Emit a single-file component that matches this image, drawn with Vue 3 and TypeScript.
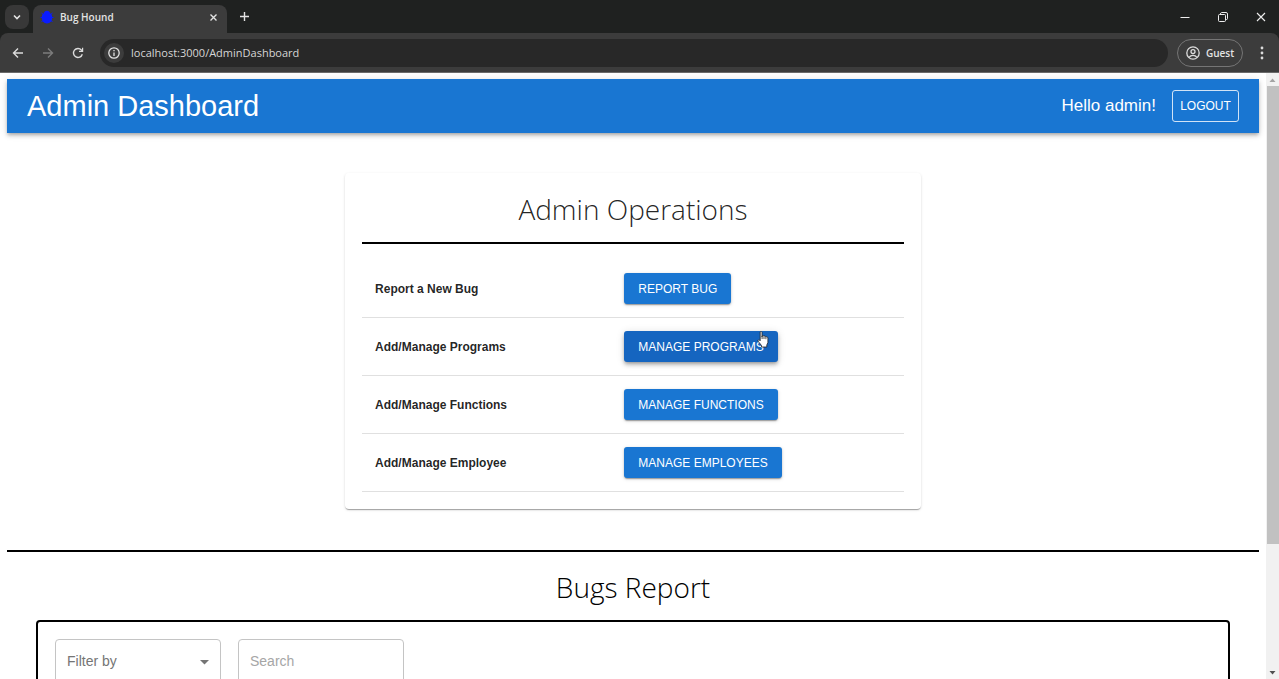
<script setup lang="ts">
import { ref } from 'vue'

interface Operation {
  id: string
  label: string
  action: string
}

const operations: Operation[] = [
  { id: 'bug', label: 'Report a New Bug', action: 'REPORT BUG' },
  { id: 'programs', label: 'Add/Manage Programs', action: 'MANAGE PROGRAMS' },
  { id: 'functions', label: 'Add/Manage Functions', action: 'MANAGE FUNCTIONS' },
  { id: 'employee', label: 'Add/Manage Employee', action: 'MANAGE EMPLOYEES' },
]

const hovered = ref('programs')
const address = ref('localhost:3000/AdminDashboard')
const filter = ref('')
const search = ref('')
</script>

<template>
  <div class="window">
    <header class="chrome">
      <div class="tabstrip">
        <button class="tab-search" aria-label="Search tabs">
          <svg width="10" height="10" viewBox="0 0 10 10"><path d="M2 3.5 5 6.5 8 3.5" fill="none" stroke="#e3e3e3" stroke-width="1.6" /></svg>
        </button>
        <div class="tab">
          <svg class="favicon" width="14" height="14" viewBox="0 0 14 14">
            <path d="M1.500 3 4 5M12.500 3 10 5M.5 7.500H13.500M1.500 12 4 9.500M12.500 12 10 9.500" stroke="#0a1cf5" stroke-width="1" />
            <path d="M7 .8C8.800 .8 9.800 2 10.100 3.200 11.600 4 12.200 5.600 12.200 7.500 12.200 11 10 13.400 7 13.400S1.800 11 1.800 7.500C1.800 5.600 2.400 4 3.900 3.200 4.200 2 5.200 .8 7 .8Z" fill="#0a1cff" />
          </svg>
          <span class="tab-title">Bug Hound</span>
          <button class="icon-button" aria-label="Close tab">
            <svg width="9" height="9" viewBox="0 0 9 9"><path d="M1.500 1.500 7.500 7.500M7.500 1.500 1.500 7.500" stroke="#e3e3e3" stroke-width="1.400" /></svg>
          </button>
        </div>
        <button class="icon-button new-tab" aria-label="New tab">
          <svg width="11" height="11" viewBox="0 0 11 11"><path d="M5.500 1V10M1 5.500H10" stroke="#e3e3e3" stroke-width="1.400" /></svg>
        </button>
        <div class="window-controls">
          <button class="icon-button" aria-label="Minimize">
            <svg width="10" height="10" viewBox="0 0 10 10"><path d="M.5 5.500H9.500" stroke="#eee" /></svg>
          </button>
          <button class="icon-button" aria-label="Restore">
            <svg width="10" height="10" viewBox="0 0 10 10" fill="none" stroke="#eee"><rect x=".5" y="2.500" width="7" height="7" rx="1" /><path d="M2.500 2.500V2A1.500 1.500 0 0 1 3.500 .5H8A1.500 1.500 0 0 1 9.500 2V6.500A1 1 0 0 1 8.500 7.500H7.500" /></svg>
          </button>
          <button class="icon-button" aria-label="Close window">
            <svg width="10" height="10" viewBox="0 0 10 10"><path d="M1 1 9 9M9 1 1 9" stroke="#eee" stroke-width="1.100" /></svg>
          </button>
        </div>
      </div>
      <div class="toolbar">
        <button class="icon-button" aria-label="Back">
          <svg width="12" height="12" viewBox="0 0 12 12"><path d="M11 6H1.500M6 1.500 1.500 6 6 10.500" fill="none" stroke="#dcdcdc" stroke-width="1.400" /></svg>
        </button>
        <button class="icon-button" aria-label="Forward">
          <svg width="12" height="12" viewBox="0 0 12 12"><path d="M1 6H10.500M6 1.500 10.500 6 6 10.500" fill="none" stroke="#7c7c7c" stroke-width="1.400" /></svg>
        </button>
        <button class="icon-button" aria-label="Reload">
          <svg width="12" height="12" viewBox="0 0 12 12"><path d="M10.300 7.200A4.500 4.500 0 1 1 9.400 3L10.600 4.200" fill="none" stroke="#dcdcdc" stroke-width="1.400" /><path d="M11.200 .8V5H7V3.800H10V.8Z" fill="#dcdcdc" /></svg>
        </button>
        <div class="omnibox">
          <button class="site-info" aria-label="View site information">
            <svg width="12" height="12" viewBox="0 0 12 12"><circle cx="6" cy="6" r="5.200" fill="none" stroke="#e3e3e3" stroke-width="1.300" /><path d="M6 5.400V9M6 3V4.300" stroke="#e3e3e3" stroke-width="1.300" /></svg>
          </button>
          <input v-model="address" class="address" type="text" aria-label="Address" />
        </div>
        <button class="guest">
          <svg width="14" height="14" viewBox="0 0 14 14" fill="none" stroke="#dcdcdc" stroke-width="1.300"><circle cx="7" cy="7" r="6.200" /><circle cx="7" cy="5.600" r="2" /><path d="M3 11.400C4.200 9.800 5.500 9.300 7 9.300S9.800 9.800 11 11.400" /></svg>
          Guest
        </button>
        <button class="icon-button menu" aria-label="Browser menu">
          <svg width="4" height="14" viewBox="0 0 4 14" fill="#dcdcdc"><circle cx="2" cy="2" r="1.400" /><circle cx="2" cy="7" r="1.400" /><circle cx="2" cy="12" r="1.400" /></svg>
        </button>
      </div>
    </header>

    <div class="viewport">
      <main class="page">
        <div class="appbar">
          <h1>Admin Dashboard</h1>
          <span class="greeting">Hello admin!</span>
          <button class="logout">LOGOUT</button>
        </div>

        <section class="card">
          <h2>Admin Operations</h2>
          <hr />
          <table>
            <tbody>
              <tr v-for="op in operations" :key="op.id">
                <th scope="row">{{ op.label }}</th>
                <td>
                  <button
                    class="action"
                    :class="{ hovered: hovered === op.id }"
                    @mouseenter="hovered = op.id"
                  >
                    {{ op.action }}
                    <svg v-if="hovered === op.id" class="pointer" width="13" height="17" viewBox="0 0 13 17">
                      <path d="M3.200 1.200C3.200 .3 5 .3 5 1.400V6L5.200 4.800C5.600 4.200 6.800 4.500 6.900 5.300 7.400 4.700 8.600 5 8.800 5.900 9.400 5.400 10.800 5.800 10.900 7V11.500L9.800 14V16H4.500V14.500L1.200 10.300C.5 9.200 1.700 8.300 2.600 9.200L3.200 9.800Z" fill="#fff" stroke="#222" stroke-width=".8" />
                      <path d="M5.100 5.500V8M7 5.600V8M8.900 6V8.200" stroke="#222" stroke-width=".8" />
                    </svg>
                  </button>
                </td>
              </tr>
            </tbody>
          </table>
        </section>

        <hr class="divider" />
        <h2 class="report-title">Bugs Report</h2>
        <section class="report">
          <div class="field">
            <select v-model="filter" aria-label="Filter by">
              <option value="">Filter by</option>
            </select>
            <svg class="caret" width="9" height="5" viewBox="0 0 9 5"><path d="M0 0H9L4.500 4.500Z" fill="#757575" /></svg>
          </div>
          <div class="field">
            <input v-model="search" type="text" placeholder="Search" aria-label="Search" />
          </div>
        </section>
      </main>
      <div class="scrollbar" aria-hidden="true">
        <svg width="13" height="13" viewBox="0 0 13 13"><path d="M3.500 9H9.500L6.500 5.500Z" fill="#a3a3a3" /></svg>
        <div class="track"><div class="thumb"></div></div>
        <svg width="13" height="13" viewBox="0 0 13 13"><path d="M3.500 5H9.500L6.500 8.500Z" fill="#505050" /></svg>
      </div>
    </div>
  </div>
</template>

<style>
body {
  margin: 0;
  overflow: hidden;
  background: #fff;
}
</style>

<style scoped>
* {
  box-sizing: border-box;
}
.window {
  display: flex;
  flex-direction: column;
  height: 100vh;
  font-family: "Liberation Sans", Arial, sans-serif;
}
button {
  font: inherit;
  color: inherit;
  margin: 0;
  padding: 0;
  border: 0;
  background: none;
}
svg {
  display: block;
  flex: none;
}

/* Browser frame */
.chrome {
  flex: none;
  background: #1f2120;
  color: #e3e3e3;
  font-family: "Open Sans", "Noto Sans", sans-serif;
}
.tabstrip {
  display: flex;
  align-items: center;
  height: 33px;
  padding-left: 5px;
}
.tab-search {
  display: grid;
  place-items: center;
  width: 24px;
  height: 24px;
  border-radius: 8px;
  background: #383838;
}
.tab {
  display: flex;
  align-items: center;
  align-self: flex-end;
  width: 194px;
  height: 28px;
  margin-left: 4px;
  padding: 0 6px 4px 7px;
  border-radius: 8px 8px 0 0;
  background: #3c3c3c;
}
.tab-title {
  flex: 1;
  margin-left: 6px;
  font-size: 10px;
  font-weight: 600;
}
.icon-button {
  display: grid;
  place-items: center;
  width: 16px;
  height: 24px;
}
.new-tab {
  margin-left: 9px;
}
.window-controls {
  display: flex;
  gap: 22px;
  margin-left: auto;
  padding-right: 10px;
}
.toolbar {
  display: flex;
  align-items: center;
  height: 40px;
  padding: 0 9px 0 10px;
  gap: 14px;
  border-bottom: 1px solid #6a6a6a;
  border-radius: 8px 8px 0 0;
  background: #3c3c3c;
}
.omnibox {
  display: flex;
  flex: 1;
  align-items: center;
  height: 28px;
  margin-right: -5px;
  padding-left: 4px;
  border-radius: 14px;
  background: #282828;
}
.site-info {
  display: grid;
  place-items: center;
  width: 20px;
  height: 20px;
  border-radius: 10px;
  background: #3c3c3c;
}
.address {
  flex: 1;
  margin-left: 7px;
  padding: 0;
  border: 0;
  outline: 0;
  background: none;
  color: #d6d6d6;
  font-family: inherit;
  font-size: 11px;
}
.guest {
  display: flex;
  align-items: center;
  justify-content: center;
  gap: 6px;
  width: 66px;
  height: 28px;
  margin-right: -3px;
  border: 1px solid #757575;
  border-radius: 14px;
  font-size: 10px;
  font-weight: 600;
}
.menu {
  width: 16px;
}

/* Page */
.viewport {
  display: flex;
  flex: 1;
  min-height: 0;
}
.page {
  flex: 1;
  padding: 6px 7px 0;
  overflow: hidden;
}
.appbar {
  display: flex;
  align-items: center;
  height: 54px;
  padding: 0 20px;
  background: #1976d2;
  color: #fff;
  box-shadow: 0 2px 3px -1px rgba(0, 0, 0, 0.2), 0 3px 4px rgba(0, 0, 0, 0.14), 0 1px 8px rgba(0, 0, 0, 0.12);
}
h1 {
  flex: 1;
  margin: 0;
  font-size: 29px;
  font-weight: 400;
  line-height: 32px;
}
.greeting {
  font-size: 17px;
}
.logout {
  width: 67px;
  height: 32px;
  margin-left: 16px;
  border: 1px solid rgba(255, 255, 255, 0.8);
  border-radius: 3px;
  font-size: 12px;
}
.card {
  width: 46%;
  margin: 40px auto 41px;
  padding: 17px;
  border-radius: 4px;
  color: rgba(0, 0, 0, 0.87);
  box-shadow: 0 2px 1px -1px rgba(0, 0, 0, 0.2), 0 1px 1px rgba(0, 0, 0, 0.14), 0 1px 3px rgba(0, 0, 0, 0.12);
}
h2 {
  margin: 0;
  font-family: "Open Sans", "Noto Sans", sans-serif;
  font-size: 28px;
  font-weight: 350;
  line-height: 38px;
  text-align: center;
}
.card hr {
  height: 2px;
  margin: 14px 0 16px;
  border: 0;
  background: #000;
}
table {
  width: 100%;
  border-collapse: separate;
  border-spacing: 0;
  table-layout: fixed;
  font-size: 12px;
}
th,
td {
  height: 58px;
  padding: 0 13px;
  border-bottom: 1px solid #e0e0e0;
  text-align: left;
}
th {
  width: 46%;
}
.action {
  position: relative;
  display: block;
  height: 31px;
  padding: 0 14px;
  border-radius: 3px;
  background: #1976d2;
  color: #fff;
  box-shadow: 0 2px 1px -1px rgba(0, 0, 0, 0.2), 0 1px 2px rgba(0, 0, 0, 0.2), 0 1px 4px rgba(0, 0, 0, 0.12);
}
.action.hovered {
  background: #1565c0;
  box-shadow: 0 2px 3px -1px rgba(0, 0, 0, 0.2), 0 3px 4px rgba(0, 0, 0, 0.2), 0 1px 8px rgba(0, 0, 0, 0.12);
}
.pointer {
  position: absolute;
  top: 0;
  right: 8px;
}
.divider {
  height: 2px;
  margin: 0;
  border: 0;
  background: #000;
}
.report-title {
  margin: 16px 0 14px;
}
.report {
  display: flex;
  gap: 17px;
  height: 300px;
  margin: 0 29px;
  padding: 17px;
  border: 2px solid #000;
  border-radius: 4px;
}
.field {
  position: relative;
  width: 166px;
  height: 44px;
}
.field select,
.field input {
  width: 100%;
  height: 100%;
  padding: 0 11px;
  border: 1px solid #c4c4c4;
  border-radius: 4px;
  outline: 0;
  appearance: none;
  background: #fff;
  color: #757575;
  font-family: inherit;
  font-size: 14px;
}
.field input::placeholder {
  color: #a6a6a6;
  opacity: 1;
}
.caret {
  position: absolute;
  top: 21px;
  right: 12px;
  pointer-events: none;
}

/* Scroll bar */
.scrollbar {
  display: flex;
  flex-direction: column;
  width: 13px;
  background: #f1f1f1;
}
.track {
  flex: 1;
}
.thumb {
  height: 79%;
  margin-left: 1px;
  background: #c1c1c1;
}
</style>
